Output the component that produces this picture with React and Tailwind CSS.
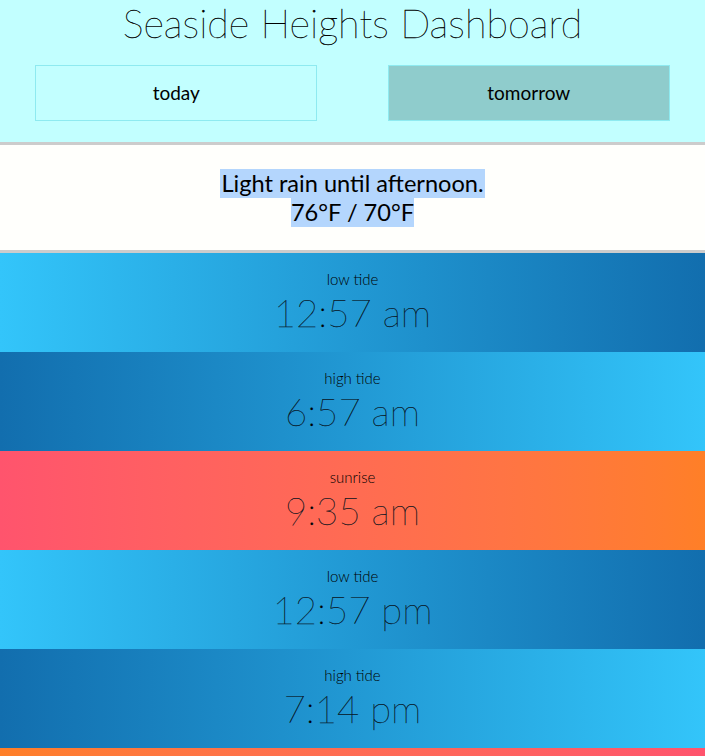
const events = [
  { label: "low tide", time: "12:57 am", bg: "bg-gradient-to-r from-[#33c5fa] to-[#126eae]" },
  { label: "high tide", time: "6:57 am", bg: "bg-gradient-to-r from-[#126eae] to-[#33c5fa]" },
  { label: "sunrise", time: "9:35 am", bg: "bg-gradient-to-r from-[#ff546d] to-[#ff7f27]" },
  { label: "low tide", time: "12:57 pm", bg: "bg-gradient-to-r from-[#33c5fa] to-[#126eae]" },
  { label: "high tide", time: "7:14 pm", bg: "bg-gradient-to-r from-[#126eae] to-[#33c5fa]" },
  { label: "sunset", time: "8:12 pm", bg: "bg-gradient-to-r from-[#ff7f27] to-[#ff546d]" },
];

export default function App() {
  return (
    <div className="h-screen overflow-hidden bg-white text-black font-['Lato',sans-serif]">
      {/* Header */}
      <header className="bg-[#c2ffff] h-[142px] border-b-[3px] border-[#cccccc] box-content">
        <h1 className="text-[39.6px] font-thin leading-[46px] text-center [-webkit-text-stroke:0.35px_black]">
          Seaside Heights Dashboard
        </h1>
        <div className="flex justify-around mt-[19px]">
          <button className="w-2/5 h-[56px] border border-[#8eeaf0] text-[19px] font-normal">
            today
          </button>
          <button className="w-2/5 h-[56px] border border-[#8eeaf0] bg-[#8fcccc] text-[19px] font-normal">
            tomorrow
          </button>
        </div>
      </header>

      {/* Forecast */}
      <section className="bg-[#fffffc] h-[105px] border-b-[3px] border-[#cccccc] box-content flex flex-col items-center justify-center text-[23.6px] leading-[29px]">
        <span className="bg-[#b4d6fd] px-[1px]">Light rain until afternoon.</span>
        <span className="bg-[#b4d6fd]">76°F / 70°F</span>
      </section>

      {/* Tides and sun */}
      {events.map((e, i) => (
        <div key={i} className={`${e.bg} h-[99px] flex flex-col items-center pt-[16px]`}>
          <div className="text-[15px] font-light leading-[20px]">{e.label}</div>
          <div className="text-[38.4px] font-thin leading-[46px] [-webkit-text-stroke:0.25px_#0a1a2a]">{e.time}</div>
        </div>
      ))}
    </div>
  );
}
